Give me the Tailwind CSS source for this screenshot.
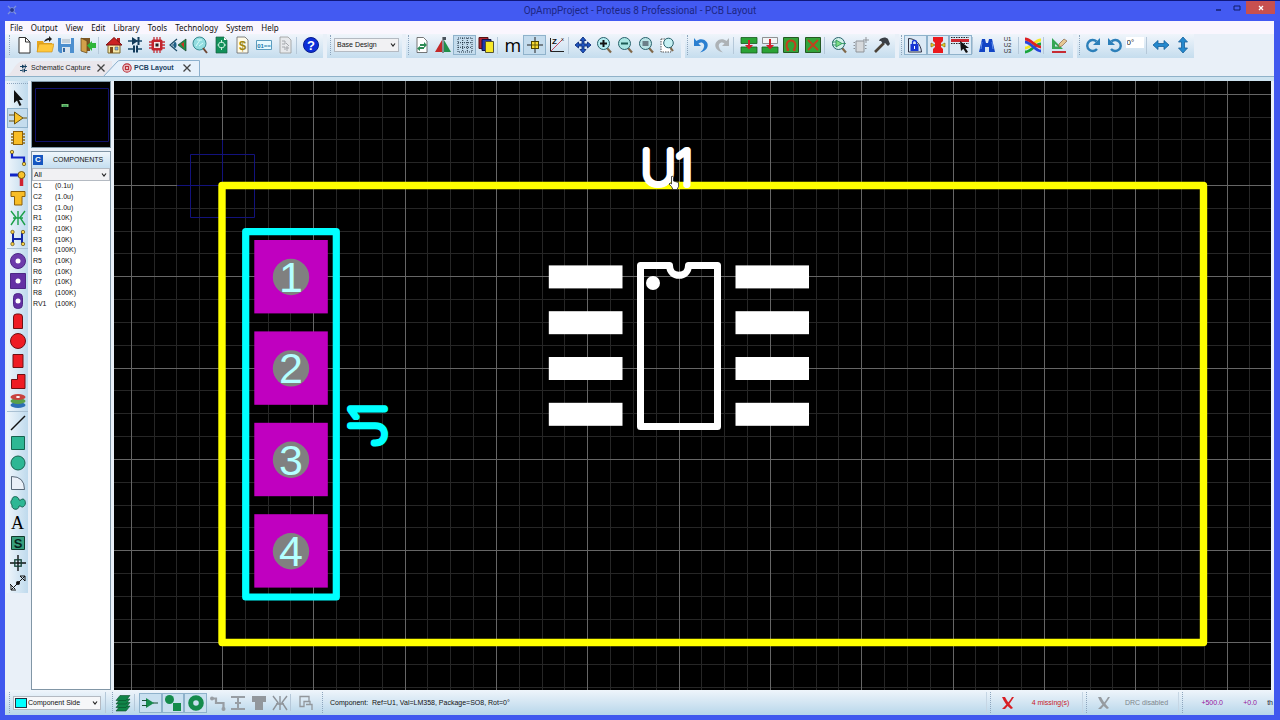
<!DOCTYPE html>
<html lang="en">
<head>
  <meta charset="UTF-8" />
  <title>OpAmpProject - Proteus 8 Professional - PCB Layout</title>
  <script src="https://cdn.jsdelivr.net/npm/@tailwindcss/browser@4"></script>
</head>
<body class="h-screen flex flex-col overflow-hidden bg-[#4058ee] border-t border-[#10187c] font-['Liberation_Sans',sans-serif] text-[7px] leading-[10px] text-[#111]">

  <!-- title bar -->
  <header class="relative h-5 shrink-0 flex items-center justify-center bg-[#435af2]">
    <svg class="absolute left-[7px] top-1 size-[10px]" viewBox="0 0 10 10"><path d="M1 1l8 8M9 1L1 9M3 5h5M5 2v6" stroke="#7f93dc" stroke-width="1.3"/><circle cx="5" cy="5" r="2" fill="#26368f"/></svg>
    <h1 class="font-['Roboto',sans-serif] text-[10px] text-[#1c2683]">OpAmpProject - Proteus 8 Professional - PCB Layout</h1>
    <div class="absolute right-[5px] top-0 flex h-[13px]">
      <button aria-label="Minimize" class="w-[18px] grid place-items-center"><svg class="size-[8px]" viewBox="0 0 8 8"><path d="M1 6h5" stroke="#111a66" stroke-width="1.4"/></svg></button>
      <button aria-label="Maximize" class="w-[18px] grid place-items-center"><svg class="size-[8px]" viewBox="0 0 8 8"><path d="M1 2h6v4H1z" fill="none" stroke="#111a66"/></svg></button>
      <button aria-label="Close" class="w-[29px] grid place-items-center bg-[#c75050]"><svg class="size-[6px]" viewBox="0 0 6 6"><path d="M1 1l4 4M5 1L1 5" stroke="#fff" stroke-width="1.3"/></svg></button>
    </div>
  </header>

  <div class="flex-1 min-h-0 ml-[5px] mr-[6px] mb-[5px] flex flex-col bg-[#e9f0f8]">
    <!-- menu -->
    <nav class="h-[13px] shrink-0 flex items-center gap-2 pl-[5px] bg-[#faf6fe] font-['Noto_Sans',sans-serif] text-[8px]">
      <button>File</button><button>Output</button><button>View</button><button>Edit</button><button>Library</button><button>Tools</button><button>Technology</button><button>System</button><button>Help</button>
    </nav>

    <!-- toolbars -->
    <div class="h-6 shrink-0 flex gap-1">
      <div class="w-[318px] flex items-center pr-px pb-[2px] bg-linear-to-b from-[#f0f5fb] to-[#c5ddee]">
        <i class="w-2 h-5 shrink-0 flex justify-center"><i class="border-l border-dotted border-[#8da5bd]"></i></i>
        <button aria-label="New" class="flex-1 h-5 grid place-items-center"><svg class="size-[18px]" viewBox="0 0 18 18"><path d="M4 1.500h6.500L15 6v11H4z" fill="#fff" stroke="#333"/><path d="M10.500 1.500V6H15" fill="none" stroke="#333"/></svg></button>
        <button aria-label="Open" class="flex-1 h-5 grid place-items-center"><svg class="size-[18px]" viewBox="0 0 18 18"><path d="M1 5h6l1 2h8v9H1z" fill="#e6a51d"/><path d="M1 16l2-8h15l-2 8z" fill="#ffc83c" stroke="#c78b16" stroke-width=".6"/><path d="M8 6c1-3 3-4 5-4V0l3 3-3 3V4c-2 0-3 1-5 2z" fill="#222"/></svg></button>
        <button aria-label="Save" class="flex-1 h-5 grid place-items-center"><svg class="size-[18px]" viewBox="0 0 18 18"><path d="M1 2h16v15H3l-2-2z" fill="#4c8fcf"/><path d="M4 2h10v6H4z" fill="#e6eef6"/><path d="M5 4h8M5 6h8" stroke="#96a6b4" stroke-width=".8"/><path d="M5 11h8v6H5z" fill="#d8e4ee"/><path d="M6 12h2v4H6z" fill="#34679f"/></svg></button>
        <button aria-label="Close project" class="flex-1 h-5 grid place-items-center"><svg class="size-[18px]" viewBox="0 0 18 18"><path d="M2 2h9v13H2z" fill="#7b5522"/><path d="M2 2l6 3v12l-6-2z" fill="#d2a04a" stroke="#604316" stroke-width=".7"/><path d="M17 7v5h-4v3L8 9.500 13 5v2z" fill="#2fb53a"/></svg></button>
        <i class="w-[5px] h-[17px] border-l border-[#b5c8d9]"></i>
        <button aria-label="Home" class="flex-1 h-5 grid place-items-center"><svg class="size-[18px]" viewBox="0 0 18 18"><path d="M3 8h12v9H3z" fill="#f6e8a8" stroke="#7a6426"/><path d="M12 2h3v5h-3z" fill="#b02020"/><path d="M1 9L9 1.500 17 9z" fill="#cb2222" stroke="#7c1010"/><path d="M5 11h3v6H5z" fill="#7a4a18"/><path d="M10 11h3v3h-3z" fill="#7fb8e6" stroke="#444" stroke-width=".5"/></svg></button>
        <button aria-label="Schematic" class="flex-1 h-5 grid place-items-center"><svg class="size-[18px]" viewBox="0 0 18 18"><path d="M2 5h14M2 13h5M11 13h5" stroke="#1a4b6e" stroke-width="1.300"/><path d="M6 1l6 4-6 4z" fill="#123b5b"/><path d="M12.500 1v8M8 9.500v7M11 9.500v7" stroke="#123b5b" stroke-width="2"/></svg></button>
        <button aria-label="PCB" class="flex-1 h-5 grid place-items-center"><svg class="size-[18px]" viewBox="0 0 18 18"><path d="M6 1v16M9 1v16M12 1v16M1 6h16M1 9h16M1 12h16" stroke="#c3343c" stroke-width="1.300"/><rect x="3.500" y="3.500" width="11" height="11" rx="1.500" fill="#c3242c"/><rect x="6" y="6" width="6" height="6" fill="#f8e5e5"/><rect x="7.500" y="7.500" width="3" height="3" fill="#222"/></svg></button>
        <button aria-label="3D view" class="flex-1 h-5 grid place-items-center"><svg class="size-[18px]" viewBox="0 0 18 18"><path d="M8 3L1 9l7 6M3 9h4" fill="none" stroke="#1d4b66" stroke-width="1.200"/><ellipse cx="6" cy="9" rx="1.500" ry="3" fill="#1c5f86"/><path d="M17 3v12L9 9z" fill="#19934a" stroke="#173e24" stroke-width=".7"/><path d="M12 8l3-2v6z" fill="#c32"/></svg></button>
        <button aria-label="Gerber view" class="flex-1 h-5 grid place-items-center"><svg class="size-[18px]" viewBox="0 0 18 18"><circle cx="8.500" cy="7.500" r="6.500" fill="#92dde0" stroke="#388a91"/><path d="M5 10l4-6M6 4h5M8 10l4-3" stroke="#d6fbfa"/><path d="M12 12l4 5" stroke="#6e4632" stroke-width="2"/></svg></button>
        <button aria-label="Design explorer" class="flex-1 h-5 grid place-items-center"><svg class="size-[18px]" viewBox="0 0 18 18"><path d="M4 1h8l3 3v13H4z" fill="#11905a" stroke="#176043" stroke-width=".7"/><path d="M12 1v3h3" fill="#fff"/><circle cx="9.500" cy="9" r="3" fill="none" stroke="#c9f0dd"/><path d="M9.500 4v3M9.500 11v3M5.500 9h1M12 9h2" stroke="#c9f0dd"/></svg></button>
        <button aria-label="Bill of materials" class="flex-1 h-5 grid place-items-center"><svg class="size-[18px]" viewBox="0 0 18 18"><path d="M4 1h8l3 3v13H4z" fill="#fffbe8" stroke="#666" stroke-width=".8"/><text x="9.500" y="14" text-anchor="middle" font-size="13" font-weight="bold" fill="#a08812">$</text></svg></button>
        <button aria-label="Source code" class="flex-1 h-5 grid place-items-center"><svg class="size-[18px]" viewBox="0 0 18 18"><path d="M1.500 4.500h15v9h-15z" fill="#e8faff" stroke="#5c9cbe"/><text x="9" y="11.500" text-anchor="middle" font-size="6" font-weight="bold" fill="#1478ac">01==</text></svg></button>
        <button aria-label="Notes" class="flex-1 h-5 grid place-items-center"><svg class="size-[18px]" viewBox="0 0 18 18"><path d="M4 1h8l3 3v13H4z" fill="#e7e9ec" stroke="#999" stroke-width=".8"/><path d="M6 5h3v3H6M10 7l3 3M6 11h3v3M10 12h3M11 10v5" fill="none" stroke="#a5a8ad"/></svg></button>
        <i class="w-[5px] h-[17px] border-l border-[#b5c8d9]"></i>
        <button aria-label="Help" class="flex-1 h-5 grid place-items-center"><svg class="size-[18px]" viewBox="0 0 18 18"><circle cx="9" cy="9" r="7.500" fill="#0d2fd8" stroke="#081c8c"/><text x="9" y="14" text-anchor="middle" font-size="13" font-weight="bold" fill="#fff">?</text></svg></button>
      </div>

      <div class="w-[75px] flex items-center pb-[2px] bg-linear-to-b from-[#f0f5fb] to-[#c5ddee]">
        <i class="w-[7px] h-5 flex justify-center"><i class="border-l border-dotted border-[#8da5bd]"></i></i>
        <label class="relative flex">
          <select aria-label="Variant" class="appearance-none w-[65px] h-[14px] pl-[2px] border border-[#b4bac2] bg-[#f1f1f3] text-[7px] leading-[10px]"><option>Base Design</option></select>
          <svg class="absolute right-[3px] top-1 size-[6px]" viewBox="0 0 6 6"><path d="M1 1.500l2 2.500 2-2.500" fill="none" stroke="#222" stroke-width="1.200"/></svg>
        </label>
      </div>

      <div class="w-[275px] flex items-center pr-[3px] pb-[2px] bg-linear-to-b from-[#f0f5fb] to-[#c5ddee]">
        <i class="w-[5px] h-5 shrink-0 flex justify-center"><i class="border-l border-dotted border-[#8da5bd]"></i></i>
        <button aria-label="Redraw" class="flex-1 h-5 grid place-items-center"><svg class="size-[18px]" viewBox="0 0 18 18"><path d="M4 1.500h6.500L14 5v11.500H4z" fill="#fff" stroke="#555" stroke-width=".8"/><path d="M7 8h4V6l3 3-3 3v-2H7zM11 13H7v2l-3-2.500L7 10v1h4z" fill="#2f8b55"/></svg></button>
        <button aria-label="Flip board" class="flex-1 h-5 grid place-items-center"><svg class="size-[18px]" viewBox="0 0 18 18"><path d="M8 4v12H1z" fill="#c32929"/><path d="M10 4v12h7z" fill="#218f4a"/><path d="M9 1v16" stroke="#333"/><path d="M9 1h3v3H9z" fill="#49535c"/></svg></button>
        <button aria-label="Toggle grid" aria-pressed="true" class="flex-1 h-5 grid place-items-center border border-[#8fb2cb] bg-[#c4dced]"><svg class="size-[18px]" viewBox="0 0 18 18"><path d="M2 2h14v14H2zM2 6.700h14M2 11.300h14M6.700 2v14M11.300 2v14" fill="none" stroke="#123" stroke-dasharray="1 1" stroke-width=".9"/></svg></button>
        <button aria-label="Layers" class="flex-1 h-5 grid place-items-center"><svg class="size-[18px]" viewBox="0 0 18 18"><path d="M1 1.500h9v11H1z" fill="#b22430" stroke="#511"/><path d="M4 3.500h9v11H4z" fill="#2037ac" stroke="#114"/><path d="M7.500 5.500h8v11h-8z" fill="#f8e829" stroke="#553"/></svg></button>
        <i class="w-[5px] h-[17px] border-l border-[#b5c8d9]"></i>
        <button class="flex-1 h-5 font-['Open_Sans',sans-serif] text-[18px] leading-[16px] text-black">m</button>
        <button aria-label="False origin" aria-pressed="true" class="flex-1 h-5 grid place-items-center border border-[#8fb2cb] bg-[#c4dced]"><svg class="size-[18px]" viewBox="0 0 18 18"><path d="M9 1v16M1 9h16" stroke="#222"/><rect x="5.500" y="5.500" width="7" height="7" fill="#f7d933" stroke="#4d4200"/><path d="M9 6v6M6 9h6" stroke="#6c5e06"/></svg></button>
        <button aria-label="Polar coordinates" class="flex-1 h-5 grid place-items-center"><svg class="size-[18px]" viewBox="0 0 18 18"><path d="M2.500 2v13.500H16" fill="none" stroke="#222"/><path d="M3 15L15 3" stroke="#c84a62"/><text x="4" y="8" font-size="8" font-weight="bold" fill="#111">Z</text><text x="13" y="5" font-size="6" fill="#333">x</text></svg></button>
        <i class="w-[5px] h-[17px] border-l border-[#b5c8d9]"></i>
        <button aria-label="Pan" class="flex-1 h-5 grid place-items-center"><svg class="size-[18px]" viewBox="0 0 18 18"><path d="M9 1l3 3.500h-2V8h3.500V6L17 9l-3.500 3v-2H10v3.500h2L9 17l-3-3.500h2V10H4.500v2L1 9l3.500-3v2H8V4.500H6z" fill="#1e55c2" stroke="#0e2c79" stroke-width=".9"/></svg></button>
        <button aria-label="Zoom in" class="flex-1 h-5 grid place-items-center"><svg class="size-[18px]" viewBox="0 0 18 18"><path d="M12 12l4 4.500" stroke="#80684a" stroke-width="2.200"/><circle cx="8.500" cy="7.500" r="6" fill="#b6ecf0" stroke="#28616c"/><path d="M5 7.500h7M8.500 4v7" stroke="#111" stroke-width="2"/></svg></button>
        <button aria-label="Zoom out" class="flex-1 h-5 grid place-items-center"><svg class="size-[18px]" viewBox="0 0 18 18"><path d="M12 12l4 4.500" stroke="#80684a" stroke-width="2.200"/><circle cx="8.500" cy="7.500" r="6" fill="#a9e6e2" stroke="#28616c"/><path d="M5 7.500h7" stroke="#1b5c55" stroke-width="2"/></svg></button>
        <button aria-label="Zoom all" class="flex-1 h-5 grid place-items-center"><svg class="size-[18px]" viewBox="0 0 18 18"><path d="M12 12l4 4.500" stroke="#80684a" stroke-width="2.200"/><circle cx="8.500" cy="7.500" r="6" fill="#b9e3e5" stroke="#28616c"/><path d="M5.500 5h6v5h-6z" fill="#6b7f88"/></svg></button>
        <button aria-label="Zoom area" class="flex-1 h-5 grid place-items-center"><svg class="size-[18px]" viewBox="0 0 18 18"><path d="M3 3h10v13H3z" fill="#fff" stroke="#555" stroke-dasharray="1.500 1"/><path d="M12 11l3 4" stroke="#80684a" stroke-width="2"/><circle cx="10.500" cy="7" r="4.800" fill="#c6f0f2" stroke="#28616c"/></svg></button>
      </div>

      <div class="w-[210px] flex items-center pr-[2px] pb-[2px] bg-linear-to-b from-[#f0f5fb] to-[#c5ddee]">
        <i class="w-[5px] h-5 shrink-0 flex justify-center"><i class="border-l border-dotted border-[#8da5bd]"></i></i>
        <button aria-label="Undo" class="flex-1 h-5 grid place-items-center"><svg class="size-[18px]" viewBox="0 0 18 18"><path d="M2 2v8h7L6.500 7.500C10 5 13 8 12 11c-.5 2-2 4-4 5.500C15 15 17 10 15 6.500 13 3 8 2 4.500 5z" fill="#2b7fd0"/></svg></button>
        <button aria-label="Redo" class="flex-1 h-5 grid place-items-center"><svg class="size-[18px]" viewBox="0 0 18 18"><path d="M16 2v8H9l2.500-2.500C8 5 5 8 6 11c.5 2 2 4 4 5.500C3 15 1 10 3 6.500 5 3 10 2 13.500 5z" fill="#adb2b6"/></svg></button>
        <i class="w-[5px] h-[17px] border-l border-[#b5c8d9]"></i>
        <button aria-label="Block copy" class="flex-1 h-5 grid place-items-center"><svg class="size-[18px]" viewBox="0 0 18 18"><path d="M1 1.500h16v6H1zM1 11h16v6H1z" fill="#2aa336" stroke="#165a1e" stroke-width=".8"/><path d="M8 4h2v5h3l-4 4.500L5 9h3z" fill="#d3202a"/></svg></button>
        <button aria-label="Block move" class="flex-1 h-5 grid place-items-center"><svg class="size-[18px]" viewBox="0 0 18 18"><path d="M1.500 1.500h15v6h-15z" fill="#f2f4f5" stroke="#777" stroke-width=".8"/><path d="M1 11h16v6H1z" fill="#2aa336" stroke="#165a1e" stroke-width=".8"/><path d="M8 3h2v6h3l-4 4.500L5 9h3z" fill="#d3202a"/></svg></button>
        <button aria-label="Block rotate" class="flex-1 h-5 grid place-items-center"><svg class="size-[18px]" viewBox="0 0 18 18"><path d="M1.500 1.500h15v15h-15z" fill="#33a338" stroke="#245a22"/><path d="M6.500 14C3 10 4.500 4.500 9 4.500S15 10 11.500 14M4.500 14H7M11 14h2.500" fill="none" stroke="#c3401d" stroke-width="2"/></svg></button>
        <button aria-label="Block delete" class="flex-1 h-5 grid place-items-center"><svg class="size-[18px]" viewBox="0 0 18 18"><path d="M1.500 1.500h15v15h-15z" fill="#33a338" stroke="#245a22"/><path d="M4 4l10 10M14 4L4 14" stroke="#c3401d" stroke-width="1.800"/></svg></button>
        <i class="w-[5px] h-[17px] border-l border-[#b5c8d9]"></i>
        <button aria-label="Pick parts" class="flex-1 h-5 grid place-items-center"><svg class="size-[18px]" viewBox="0 0 18 18"><path d="M12 12l4 4.500" stroke="#80684a" stroke-width="2.200"/><circle cx="8.500" cy="7.500" r="6" fill="#d2f2ea" stroke="#28616c"/><path d="M6 4l6 3.500L6 11zM2 6h4M2 9h4M12 7.500h4" fill="#7fdc84" stroke="#1f8c56" stroke-width=".8"/></svg></button>
        <button aria-label="Make package" class="flex-1 h-5 grid place-items-center"><svg class="size-[18px]" viewBox="0 0 18 18"><path d="M4 5h8v11H4z" fill="#d6d9dc" stroke="#8e9399"/><path d="M3 6.500H1.500M3 9.500H1.500M3 12.500H1.500M13 9.500h1.500M13 12.500h1.500M14 1v6M11 4h6" stroke="#8e9399"/></svg></button>
        <button aria-label="Decompose" class="flex-1 h-5 grid place-items-center"><svg class="size-[18px]" viewBox="0 0 18 18"><path d="M2 16L11 7" stroke="#4b4238" stroke-width="2.600"/><path d="M7 3c3-2 6-2 8 0l2 5-2 2-3-3-2 1-2-3-2 0z" fill="#3b4047"/></svg></button>
      </div>

      <div class="w-[174px] flex items-center pr-1 pb-[2px] bg-linear-to-b from-[#f0f5fb] to-[#c5ddee]">
        <i class="w-[5px] h-5 shrink-0 flex justify-center"><i class="border-l border-dotted border-[#8da5bd]"></i></i>
        <button aria-label="Trace angle lock" aria-pressed="true" class="flex-1 h-5 grid place-items-center border border-[#8fb2cb] bg-[#dbe9f5]"><svg class="size-[18px]" viewBox="0 0 18 18"><path d="M2.500 16V2.500C9 2.500 15 8 15.500 16z" fill="#d5e8f6" stroke="#334"/><rect x="4.500" y="8" width="8" height="7" fill="#1736d4"/><path d="M6.500 8V6.500a2 2 0 0 1 4 0V8" fill="none" stroke="#1736d4" stroke-width="1.300"/><path d="M8.500 10v3" stroke="#fff"/></svg></button>
        <button aria-label="Auto neck-down" aria-pressed="true" class="flex-1 h-5 grid place-items-center border border-[#8fb2cb] bg-[#dbe9f5]"><svg class="size-[18px]" viewBox="0 0 18 18"><path d="M4 1h10v4l-2 2v4l2 2v4H4v-4l2-2V7L4 5z" fill="#ea1a1d"/><path d="M2 7l4 2-4 2zM16 7l-4 2 4 2z" fill="#f7d422" stroke="#6e5d00" stroke-width=".6"/></svg></button>
        <button aria-label="Auto track selection" aria-pressed="true" class="flex-1 h-5 grid place-items-center border border-[#8fb2cb] bg-[#dbe9f5]"><svg class="size-[18px]" viewBox="0 0 18 18"><path d="M0 3h18v3H0z" fill="#cb2630"/><path d="M0 1.500h18M0 7.500h18" stroke="#222" stroke-dasharray="1.500 1"/><path d="M9 5l1 10 2.300-2.200L15 17l2-1-2.500-4H18z" fill="#111"/></svg></button>
        <i class="w-[5px] h-[17px] border-l border-[#b5c8d9]"></i>
        <button aria-label="Search" class="flex-1 h-5 grid place-items-center"><svg class="size-[18px]" viewBox="0 0 18 18"><path d="M4 3h3l1 4h2l1-4h3l3 13h-6v-5H7v5H1z" fill="#1245c5"/><path d="M4 6l-1 7M14 6l1 7" stroke="#6592ed"/></svg></button>
        <button aria-label="Name generator" class="flex-1 h-5 text-[6px] leading-[6px] text-[#222]">U1<br>U2<br>U3</button>
        <i class="w-[5px] h-[17px] border-l border-[#b5c8d9]"></i>
        <button aria-label="Auto-router" class="flex-1 h-5 grid place-items-center"><svg class="size-[18px]" viewBox="0 0 18 18"><g fill="none" stroke-width="2.800"><path d="M1 16c6 0 10-8 16-8" stroke="#18a53c"/><path d="M1 12c6 0 10-8 16-8" stroke="#f4e824"/><path d="M1 6c6 0 10 9 16 9" stroke="#2547dd"/><path d="M1 3c6 0 10 8 16 8" stroke="#db2024"/></g></svg></button>
        <i class="w-[5px] h-[17px] border-l border-[#b5c8d9]"></i>
        <button aria-label="Design rules" class="flex-1 h-5 grid place-items-center"><svg class="size-[18px]" viewBox="0 0 18 18"><path d="M2 2v11h11zM5 8v2.500h3z" fill="#36a755" fill-rule="evenodd"/><path d="M2 16h14" stroke="#c62c34" stroke-width="2"/><path d="M9 8l5-5 3 2-5 5-3 1z" fill="#e6c893" stroke="#8a6748" stroke-width=".7"/></svg></button>
      </div>

      <div class="w-[117px] flex items-center pb-[2px] bg-linear-to-b from-[#f0f5fb] to-[#c5ddee]">
        <i class="w-[5px] h-5 shrink-0 flex justify-center"><i class="border-l border-dotted border-[#8da5bd]"></i></i>
        <button aria-label="Rotate clockwise" class="flex-1 h-5 grid place-items-center"><svg class="size-[18px]" viewBox="0 0 18 18"><path d="M13 13a5.500 5.500 0 1 1-.5-7.500" fill="none" stroke="#2c7fb9" stroke-width="2.400"/><path d="M16 2v7H9z" fill="#2c7fb9"/></svg></button>
        <button aria-label="Rotate anti-clockwise" class="flex-1 h-5 grid place-items-center"><svg class="size-[18px]" viewBox="0 0 18 18"><path d="M5 13a5.500 5.500 0 1 0 .5-7.500" fill="none" stroke="#2c7fb9" stroke-width="2.400"/><path d="M2 2v7h7z" fill="#2c7fb9"/></svg></button>
        <input aria-label="Rotation" value="0°" class="w-[18px] h-[11px] mb-[6px] pl-px bg-white text-[8px] leading-[10px]" />
        <i class="w-[5px] h-[17px] ml-[2px] border-l border-[#b5c8d9]"></i>
        <button aria-label="Mirror horizontally" class="flex-1 h-5 grid place-items-center"><svg class="size-[18px]" viewBox="0 0 18 18"><path d="M1 9l5-4.500v3h6v-3L17 9l-5 4.500v-3H6v3z" fill="#2488cd" stroke="#17609a" stroke-width=".8"/></svg></button>
        <button aria-label="Mirror vertically" class="flex-1 h-5 grid place-items-center"><svg class="size-[18px]" viewBox="0 0 18 18"><path d="M9 1l4.500 5h-3v6h3L9 17l-4.500-5h3V6h-3z" fill="#2488cd" stroke="#17609a" stroke-width=".8"/></svg></button>
      </div>
    </div>

    <!-- document tabs -->
    <div class="relative h-[18px] shrink-0 flex items-center pl-[14px] pt-[2px] whitespace-nowrap">
      <svg class="absolute left-0 bottom-0 w-[200px] h-4" viewBox="0 0 200 16"><path d="M1 16C8 14 9 3 17 1h90v15z" fill="#eae7ec"/><path d="M98 17L112 2q1-1.500 3-1.500h79.500V17" fill="#e6f1fb" stroke="#8db1ce"/></svg>
      <a href="#" class="relative flex items-center gap-[3px] text-[#222]">
        <svg class="size-[9px]" viewBox="0 0 18 18"><path d="M2 5h14M2 13h5M11 13h5" stroke="#1a4b6e" stroke-width="2"/><path d="M6 1l6 4-6 4z" fill="#123b5b"/><path d="M12.500 1v8M8 9.500v7M11 9.500v7" stroke="#123b5b" stroke-width="2"/></svg>
        <span class="w-[60px]">Schematic Capture</span>
      </a>
      <button aria-label="Close Schematic Capture" class="relative ml-[6px]"><svg class="size-[8px]" viewBox="0 0 8 8"><path d="M.5.500l7 7M7.500.500l-7 7" stroke="#444" stroke-width="1.300"/></svg></button>
      <a href="#" class="relative ml-[17px] flex items-center gap-[2px] font-bold text-[#1c4260]">
        <svg class="size-[10px]" viewBox="0 0 18 18"><circle cx="9" cy="9" r="7.500" fill="#f6dede" stroke="#b9303a" stroke-width="2"/><rect x="5" y="5" width="8" height="8" fill="#b9303a"/><rect x="7.500" y="7.500" width="3" height="3" fill="#fff"/></svg>
        <span class="w-[44px]">PCB Layout</span>
      </a>
      <button aria-label="Close PCB Layout" class="relative ml-[5px]"><svg class="size-[8px]" viewBox="0 0 8 8"><path d="M.5.500l7 7M7.500.500l-7 7" stroke="#444" stroke-width="1.300"/></svg></button>
    </div>
    <div class="h-[5px] shrink-0 border-t border-[#8fb2c9] bg-[#cde3f0]"></div>

    <main class="flex-1 min-h-0 flex">
      <!-- mode buttons -->
      <div class="w-[26px] shrink-0 pl-[2px] pr-[3px]">
        <div class="flex flex-col bg-linear-to-r from-[#eef5fb] to-[#bfdaed]">
          <i class="h-[7px] pt-[2px]"><i class="block border-t border-dotted border-[#8da5bd]"></i></i>
          <button aria-label="Selection" class="h-5 grid place-items-center"><svg class="size-[18px]" viewBox="0 0 18 18"><path d="M5 1v13l3-2.500L10.500 17l2-1-2.500-5h4z" fill="#111"/></svg></button>
          <button aria-label="Component" aria-pressed="true" class="h-5 grid place-items-center border border-[#8fb2cb] bg-[#c4dced]"><svg class="size-[18px]" viewBox="0 0 18 18"><path d="M5.500 3L14 9l-8.500 6z" fill="#f8c32b" stroke="#6d5410"/><path d="M0 6h5M0 12h5M14 9h4" stroke="#6d5410"/></svg></button>
          <button aria-label="Package" class="h-5 grid place-items-center"><svg class="size-[18px]" viewBox="0 0 18 18"><path d="M2 5h14M2 8h14M2 11h14M2 14h14" stroke="#8a6a1a" stroke-width="1.500"/><rect x="4.500" y="2.500" width="9" height="13" fill="#f8bd26" stroke="#8a5f0c"/></svg></button>
          <button aria-label="Track" class="h-5 grid place-items-center"><svg class="size-[18px]" viewBox="0 0 18 18"><path d="M3 3v5.500h12V14" fill="none" stroke="#1227c6" stroke-width="2.200"/><circle cx="3" cy="3" r="1.700" fill="#f8d14a" stroke="#5d4a08" stroke-width=".7"/><circle cx="15" cy="15" r="1.700" fill="#f8d14a" stroke="#5d4a08" stroke-width=".7"/></svg></button>
          <button aria-label="Via" class="h-5 grid place-items-center"><svg class="size-[18px]" viewBox="0 0 18 18"><path d="M1 6h9" stroke="#1227c6" stroke-width="3"/><path d="M12.500 7v10" stroke="#cf2230" stroke-width="3.500"/><circle cx="12.500" cy="6" r="3.500" fill="#f8c32b" stroke="#6d5410"/></svg></button>
          <button aria-label="Zone" class="h-5 grid place-items-center"><svg class="size-[18px]" viewBox="0 0 18 18"><path d="M2 2.500h14v5h-3v8.500H5.500V7.500H2z" fill="#f8bd26" stroke="#8a5f0c"/></svg></button>
          <button aria-label="Ratsnest" class="h-5 grid place-items-center"><svg class="size-[18px]" viewBox="0 0 18 18"><path d="M2 2l5 6.500L2 16M16 2l-5 6.500L16 16M9 2v14M4 9h10" fill="none" stroke="#1ca04a" stroke-width="1.400"/></svg></button>
          <button aria-label="Connectivity highlight" class="h-5 grid place-items-center"><svg class="size-[18px]" viewBox="0 0 18 18"><path d="M4 4v10M13 4v10M4 10h9" stroke="#1227a6" stroke-width="2"/><g fill="#f8d14a" stroke="#5d4a08" stroke-width=".7"><circle cx="3.500" cy="3" r="1.700"/><circle cx="14" cy="3" r="1.700"/><circle cx="3.500" cy="15" r="1.700"/><circle cx="14" cy="15" r="1.700"/></g></svg></button>
          <i class="h-[3px] border-t border-[#a9c0d3]"></i>
          <button aria-label="Round pad" class="h-5 grid place-items-center"><svg class="size-[18px]" viewBox="0 0 18 18"><circle cx="9" cy="9" r="7.500" fill="#6d3bab" stroke="#4d2785"/><circle cx="9" cy="9" r="2.500" fill="#fff"/></svg></button>
          <button aria-label="Square pad" class="h-5 grid place-items-center"><svg class="size-[18px]" viewBox="0 0 18 18"><path d="M1.500 1.500h15v15h-15z" fill="#6430a4" stroke="#4d2785"/><circle cx="9" cy="9" r="2.500" fill="#fff"/></svg></button>
          <button aria-label="DIL pad" class="h-5 grid place-items-center"><svg class="size-[18px]" viewBox="0 0 18 18"><rect x="4.500" y="1.500" width="9" height="15" rx="4" fill="#6430a4" stroke="#4d2785"/><circle cx="9" cy="9" r="2.500" fill="#fff"/></svg></button>
          <button aria-label="Edge connector pad" class="h-5 grid place-items-center"><svg class="size-[18px]" viewBox="0 0 18 18"><path d="M4.500 16.500V5q0-3 3-3h3q3 0 3 3v11.500z" fill="#ee1c24" stroke="#6e1013"/></svg></button>
          <button aria-label="Circular SMT pad" class="h-5 grid place-items-center"><svg class="size-[18px]" viewBox="0 0 18 18"><circle cx="9" cy="9" r="7.500" fill="#ee1c24" stroke="#6e1013"/></svg></button>
          <button aria-label="Rectangular SMT pad" class="h-5 grid place-items-center"><svg class="size-[18px]" viewBox="0 0 18 18"><path d="M4 2.500h10v13H4z" fill="#ee1c24" stroke="#6e1013"/></svg></button>
          <button aria-label="Polygonal SMT pad" class="h-5 grid place-items-center"><svg class="size-[18px]" viewBox="0 0 18 18"><path d="M2.500 7.500h6v-5h7.500v14H2.500z" fill="#ee1c24" stroke="#6e1013"/></svg></button>
          <button aria-label="Padstack" class="h-5 grid place-items-center"><svg class="size-[18px]" viewBox="0 0 18 18"><ellipse cx="9" cy="13" rx="7.500" ry="3" fill="#2d6fb4"/><ellipse cx="9" cy="9" rx="7.500" ry="3" fill="#5aa048"/><ellipse cx="9" cy="5" rx="7.500" ry="3" fill="#c8423f"/><ellipse cx="9" cy="5" rx="2" ry="1" fill="#fff"/></svg></button>
          <i class="h-[2px] border-t border-[#a9c0d3]"></i>
          <button aria-label="Line" class="h-5 grid place-items-center"><svg class="size-[18px]" viewBox="0 0 18 18"><path d="M2 16L16 2" stroke="#111" stroke-width="1.400"/></svg></button>
          <button aria-label="Box" class="h-5 grid place-items-center"><svg class="size-[18px]" viewBox="0 0 18 18"><path d="M2.500 2.500h13v13h-13z" fill="#2eb794" stroke="#17624f"/></svg></button>
          <button aria-label="Circle" class="h-5 grid place-items-center"><svg class="size-[18px]" viewBox="0 0 18 18"><circle cx="9" cy="9" r="7" fill="#2eb794" stroke="#17624f"/></svg></button>
          <button aria-label="Arc" class="h-5 grid place-items-center"><svg class="size-[18px]" viewBox="0 0 18 18"><path d="M2.500 15.500v-13q13 0 13 13z" fill="#eaf0f8" stroke="#345" stroke-width=".8"/></svg></button>
          <button aria-label="Path" class="h-5 grid place-items-center"><svg class="size-[18px]" viewBox="0 0 18 18"><path d="M10 6c1.500 1 2-1 4-1 3 .5 3.500 7-.5 8-1.500 0-2-1.500-3.500-1 0 5-8 4-7-1-2-2-1-5 0-5 0-5 7-4 7 0z" fill="#2eb794" stroke="#17624f"/></svg></button>
          <button class="h-5 font-['Liberation_Serif',serif] text-[18px] leading-5 text-black">A</button>
          <button aria-label="Symbol" class="h-5 grid place-items-center"><svg class="size-[18px]" viewBox="0 0 18 18"><path d="M2.500 2.500h13v13h-13z" fill="#38a07d" stroke="#113a2c"/><text x="9" y="13.500" text-anchor="middle" font-size="13" font-weight="bold" fill="#06231a">S</text></svg></button>
          <button aria-label="Marker" class="h-5 grid place-items-center"><svg class="size-[18px]" viewBox="0 0 18 18"><path d="M9 1v16M1 9h16" stroke="#111" stroke-width="1.400"/><rect x="5.800" y="5.800" width="6.400" height="6.400" fill="none" stroke="#123f33" stroke-width="1.300"/></svg></button>
          <button aria-label="Dimension" class="h-5 grid place-items-center"><svg class="size-[18px]" viewBox="0 0 18 18"><path d="M2 16L16 2M11 2h5v5M7 16H2v-5M1 10l5 5M11 2l5 5" fill="none" stroke="#111"/><circle cx="9" cy="9" r="2" fill="#111"/></svg></button>
        </div>
      </div>

      <!-- overview and object selector -->
      <aside class="w-20 shrink-0 flex flex-col gap-[3px]">
        <div class="h-[67px] shrink-0 border border-[#8299a8] bg-black">
          <svg class="size-full" viewBox="0 0 78 65"><path d="M3.500 6.500h73v53h-73z" fill="none" stroke="#11116c"/><path d="M29.500 22h7v3h-7z" fill="#72bf70"/><path d="M31 24h2M34 23v2" stroke="#174"/></svg>
        </div>
        <section class="flex-1 min-h-0 flex flex-col border border-[#8196a6] bg-white">
          <div class="h-4 shrink-0 flex items-center pl-px bg-linear-to-b from-[#f0f6fb] to-[#c4def0]">
            <button class="size-[10px] bg-[#1556c0] text-white font-bold text-[8px] leading-[10px]">C</button>
            <h2 class="ml-[10px]">COMPONENTS</h2>
          </div>
          <label class="relative flex">
            <select aria-label="Filter" class="appearance-none w-full h-[13px] pl-px border border-[#b4bac2] bg-[#f1f1f3] text-[7px] leading-[10px]"><option>All</option></select>
            <svg class="absolute right-[3px] top-1 size-[6px]" viewBox="0 0 6 6"><path d="M1 1.500l2 2.500 2-2.500" fill="none" stroke="#222" stroke-width="1.200"/></svg>
          </label>
          <table class="w-full h-32 shrink-0 text-left">
            <tbody id="parts"></tbody>
          </table>
        </section>
      </aside>

      <!-- board; drawing units are window pixels -->
      <div class="flex-1 min-w-0 ml-[3px] mr-[3px] bg-black overflow-hidden">
        <svg class="size-full" role="img" aria-label="Board layout">
          <g transform="translate(-114 -81)">
            <g id="grid" fill="none" shape-rendering="crispEdges"></g>
            <path d="M190.500 154.500h64v63h-64zM177 185.500h45M222.500 140v45" fill="none" stroke="#12127c"/>
            <rect x="222" y="185.500" width="981.500" height="457" fill="none" stroke="#ff0" stroke-width="7.400" stroke-linejoin="round"/>
            <rect x="245.700" y="231.700" width="90.600" height="365.300" fill="none" stroke="#0ff" stroke-width="7.200" stroke-linejoin="round"/>
            <g id="j1" fill="#c000c0" text-anchor="middle" font-size="43"></g>
            <text transform="translate(385 425) rotate(-90)" text-anchor="middle" class="font-['Inter',sans-serif] font-thin" font-size="48" fill="#0ff" stroke="#0ff" stroke-width="6" stroke-linejoin="round">J1</text>
            <g id="u1" fill="#fff"></g>
            <path d="M669.500 265.500h-29v161h77v-161h-29c0 13-19 13-19 0" fill="none" stroke="#fff" stroke-width="7" stroke-linejoin="round" stroke-linecap="round"/>
            <circle cx="653" cy="283" r="7" fill="#fff"/>
            <text x="667" y="185" text-anchor="middle" class="font-['Inter',sans-serif] font-thin" font-size="48" fill="#fff" stroke="#fff" stroke-width="6" stroke-linejoin="round">U1</text>
            <path d="M671.500 176.500q1.500-1 2 1v3.500l5 1.500q1 4-1.500 7h-4q-1-3-4-5.500 1-2 2.500 0z" fill="#fff" stroke="#222" stroke-width=".8"/>
          </g>
        </svg>
      </div>
    </main>

    <!-- status bar -->
    <footer class="h-[25px] shrink-0 flex items-center bg-linear-to-b from-[#eff5fb] to-[#b7d6ea]">
      <i class="w-2 h-[21px] shrink-0 flex justify-center"><i class="border-l border-dotted border-[#8da5bd]"></i></i>
      <label class="relative flex">
        <select aria-label="Layer" class="appearance-none w-[88px] h-[14px] pl-[14px] border border-[#b4bac2] bg-[#f6f7f9] text-[7px] leading-[10px]"><option>Component Side</option></select>
        <i class="absolute left-[2px] top-[2px] w-3 h-[10px] border border-[#234] bg-[#0ff]"></i>
        <svg class="absolute right-[3px] top-1 size-[6px]" viewBox="0 0 6 6"><path d="M1 1.500l2 2.500 2-2.500" fill="none" stroke="#222" stroke-width="1.200"/></svg>
      </label>
      <i class="w-3 h-[21px] shrink-0 flex justify-between pl-1"><i class="border-l border-[#b5c8d9]"></i><i class="border-l border-dotted border-[#8da5bd]"></i></i>
      <div class="w-[203px] flex items-center">
        <button aria-label="All layers" class="flex-1 h-5 grid place-items-center"><svg class="size-[18px]" viewBox="0 0 18 18"><g fill="#118548" stroke="#0a4c29" stroke-width=".6"><path d="M2 17l4-5h10l-4 5z"/><path d="M2 13.500l4-5h10l-4 5z"/><path d="M2 10l4-5h10l-4 5z"/><path d="M2 6.500l4-5h10l-4 5z"/></g></svg></button>
        <i class="w-[5px] h-[17px] border-l border-[#b5c8d9]"></i>
        <button aria-label="Filter components" aria-pressed="true" class="flex-1 h-5 grid place-items-center border border-[#8fb2cb] bg-[#c9e0f0]"><svg class="size-[18px]" viewBox="0 0 18 18"><path d="M5 4l8 5-8 5z" fill="#158b4c"/><path d="M1 6.500h5M1 11.500h5M12 9h5" stroke="#174f35"/></svg></button>
        <button aria-label="Filter graphics" aria-pressed="true" class="flex-1 h-5 grid place-items-center border border-[#8fb2cb] bg-[#c9e0f0]"><svg class="size-[18px]" viewBox="0 0 18 18"><circle cx="5.500" cy="5.500" r="4.500" fill="#158b4c"/><path d="M9 9h8v8H9z" fill="#158b4c"/></svg></button>
        <button aria-label="Filter pins" aria-pressed="true" class="flex-1 h-5 grid place-items-center border border-[#8fb2cb] bg-[#c9e0f0]"><svg class="size-[18px]" viewBox="0 0 18 18"><circle cx="9" cy="9" r="5.300" fill="none" stroke="#158b4c" stroke-width="5"/></svg></button>
        <button aria-label="Filter tracks" class="flex-1 h-5 grid place-items-center"><svg class="size-[18px]" viewBox="0 0 18 18"><path d="M2 4.500h5V9h7.500v6" fill="none" stroke="#989ea4" stroke-width="2.200"/><circle cx="3" cy="4.500" r="2" fill="#989ea4"/><circle cx="14.500" cy="15" r="2" fill="#989ea4"/></svg></button>
        <button aria-label="Filter vias" class="flex-1 h-5 grid place-items-center"><svg class="size-[18px]" viewBox="0 0 18 18"><path d="M2 3h14M2 15h14M6 9h6M9 4v10" stroke="#989ea4" stroke-width="2"/></svg></button>
        <button aria-label="Filter zones" class="flex-1 h-5 grid place-items-center"><svg class="size-[18px]" viewBox="0 0 18 18"><path d="M2 2h14v6h-3v8H5V8H2z" fill="#92979c"/></svg></button>
        <button aria-label="Filter ratsnest" class="flex-1 h-5 grid place-items-center"><svg class="size-[18px]" viewBox="0 0 18 18"><path d="M2 2l5 6.500L2 16M16 2l-5 6.500L16 16M9 2v14M5 10h8" fill="none" stroke="#8d9298" stroke-width="1.400"/></svg></button>
        <i class="w-[5px] h-[17px] border-l border-[#b5c8d9]"></i>
        <button aria-label="Filter paths" class="flex-1 h-5 grid place-items-center"><svg class="size-[18px]" viewBox="0 0 18 18"><path d="M3 2.500h9v5H7v5H3zM9 10.500h6V16M7 7.500h6v3" fill="none" stroke="#92979c" stroke-width="1.300"/></svg></button>
      </div>
      <i class="w-[8px] h-[21px] shrink-0 ml-[6px] border-l border-dotted border-[#8da5bd]"></i>
      <output class="flex-1 min-w-0 whitespace-pre">Component:  Ref=U1, Val=LM358, Package=SO8, Rot=0°</output>
      <div class="w-24 flex items-center">
        <i class="w-[5px] h-[21px] mr-[10px] border-x border-l-[#c6d6e4] border-r-[#8da5bd] [border-right-style:dotted]"></i>
        <svg class="size-[14px]" viewBox="0 0 14 14"><path d="M1 13C5 9 9 5 11 1h2C10 6 7 10 4 13zM1 1h3c2 4 5 8 8 11l-2 1C6 10 3 6 1 1z" fill="#d81f25"/></svg>
        <span class="flex-1 pl-1 text-center text-[#c8201c]">4 missing(s)</span>
      </div>
      <div class="w-24 flex items-center">
        <i class="w-[5px] h-[21px] mr-[10px] border-x border-l-[#c6d6e4] border-r-[#8da5bd] [border-right-style:dotted]"></i>
        <svg class="size-[14px]" viewBox="0 0 14 14"><path d="M1 13C5 9 9 5 11 1h2C10 6 7 10 4 13zM1 1h3c2 4 5 8 8 11l-2 1C6 10 3 6 1 1z" fill="#969ba0"/></svg>
        <span class="flex-1 pl-1 text-center text-[#7e858c]">DRC disabled</span>
      </div>
      <div class="w-24 flex items-center text-[#94149c]">
        <i class="w-[5px] h-[21px] border-x border-l-[#c6d6e4] border-r-[#8da5bd] [border-right-style:dotted]"></i>
        <span class="w-[40px] text-right">+500.0</span>
        <span class="w-[34px] text-right">+0.0</span>
        <span class="ml-auto pr-px text-[#223]">th</span>
      </div>
    </footer>
  </div>

  <script>
    const parts = [
      ['C1', '0.1u'], ['C2', '1.0u'], ['C3', '1.0u'], ['R1', '10K'], ['R2', '10K'], ['R3', '10K'],
      ['R4', '100K'], ['R5', '10K'], ['R6', '10K'], ['R7', '10K'], ['R8', '100K'], ['RV1', '100K']
    ];
    document.getElementById('parts').innerHTML = parts.map(([ref, val]) =>
      `<tr><td class="w-[23px] p-0 pl-px">${ref}</td><td class="p-0">(${val})</td></tr>`).join('');

    // grid: a bright line every fourth step
    const step = 22.83;
    let minor = '', major = '';
    for (let i = -4; i < 120; i++) {
      const x = Math.round(222 + i * step), y = Math.round(185 + i * step);
      const d = `M${x}.5 81V2000M114 ${y}.5H3000`;
      if (i % 4 === 0) major += d; else minor += d;
    }
    document.getElementById('grid').innerHTML =
      `<path d="${minor}" stroke="#262626"/><path d="${major}" stroke="#666"/>`;

    document.getElementById('j1').innerHTML = [1, 2, 3, 4].map((n, i) => {
      const y = 240 + i * 91.4;
      return `<rect x="254.300" y="${y}" width="73.500" height="73.400"/>
        <circle cx="291" cy="${y + 37}" r="18.200" fill="#808080"/>
        <text x="291" y="${y + 52}" fill="#b4ffff">${n}</text>`;
    }).join('');

    document.getElementById('u1').innerHTML = [0, 1, 2, 3].map(i => {
      const y = 265.4 + i * 45.8;
      return `<rect x="548.800" y="${y}" width="73.700" height="23"/><rect x="735.500" y="${y}" width="73.500" height="23"/>`;
    }).join('');
  </script>
</body>
</html>
